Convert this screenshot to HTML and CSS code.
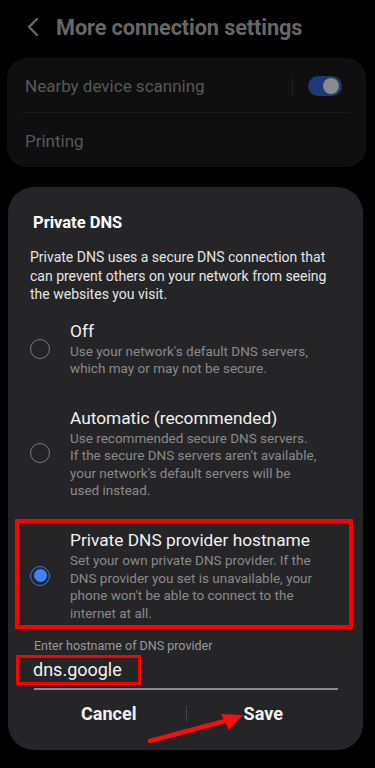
FILE: index.html
```html
<!DOCTYPE html>
<html>
<head>
<meta charset="utf-8">
<link rel="stylesheet" href="styles.css">
</head>
<body>
<div class="screen">
  <header class="topbar">
    <svg class="back" width="14" height="20" viewBox="0 0 14 20"><path d="M11 2 L3 10 L11 18" fill="none" stroke="#6a6a6a" stroke-width="2.4" stroke-linecap="round" stroke-linejoin="round"/></svg>
    <h1 class="title">More connection settings</h1>
  </header>

  <section class="card">
    <div class="row row-toggle">
      <span class="row-label">Nearby device scanning</span>
      <span class="vsep"></span>
      <span class="toggle"><span class="knob"></span></span>
    </div>
    <div class="hsep"></div>
    <div class="row">
      <span class="row-label">Printing</span>
    </div>
  </section>

  <section class="dialog">
    <h2 class="dlg-title">Private DNS</h2>
    <p class="dlg-desc">Private DNS uses a secure DNS connection that<br>can prevent others on your network from seeing<br>the websites you visit.</p>

    <div class="option opt-off">
      <span class="radio"></span>
      <div class="opt-text">
        <div class="opt-title">Off</div>
        <div class="opt-desc">Use your network's default DNS servers,<br>which may or may not be secure.</div>
      </div>
    </div>

    <div class="option opt-auto">
      <span class="radio"></span>
      <div class="opt-text">
        <div class="opt-title">Automatic (recommended)</div>
        <div class="opt-desc">Use recommended secure DNS servers.<br>If the secure DNS servers aren't available,<br>your network's default servers will be<br>used instead.</div>
      </div>
    </div>

    <div class="option opt-host">
      <span class="radio radio-on"><span class="dot"></span></span>
      <div class="opt-text">
        <div class="opt-title">Private DNS provider hostname</div>
        <div class="opt-desc">Set your own private DNS provider. If the<br>DNS provider you set is unavailable, your<br>phone won't be able to connect to the<br>internet at all.</div>
      </div>
    </div>

    <div class="field">
      <div class="field-label">Enter hostname of DNS provider</div>
      <div class="field-box"><span class="field-value">dns.google</span></div>
      <div class="field-line"></div>
    </div>

    <div class="actions">
      <span class="btn">Cancel</span>
      <span class="asep"></span>
      <span class="btn">Save</span>
    </div>

    <svg class="arrow" width="110" height="40" viewBox="0 0 110 40"><line x1="3" y1="34" x2="82" y2="13" stroke="#f41010" stroke-width="4.5" stroke-linecap="round"/><polygon points="96,8 74,7 82,23" fill="#f41010"/></svg>
  </section>
</div>
</body>
</html>
```

FILE: styles.css
```css
* { box-sizing: border-box; }
html, body { margin: 0; padding: 0; background: #000; }
body { font-family: Roboto, "Noto Sans", sans-serif; color: #eee; }
.screen { width: 375px; height: 768px; overflow: hidden; background: #000; }

.topbar { height: 58px; display: flex; align-items: center; padding-left: 26px; padding-bottom: 4px; }
.back { flex: none; }
.title { margin: 0 0 0 16px; font-size: 21.7px; font-weight: 700; color: #676767; letter-spacing: -0.1px; }

.card { margin: 0 9px 0 7px; background: #0f0f0f; border-radius: 20px; padding: 0 16px 0 18px; }
.row { height: 54px; display: flex; align-items: center; padding-top: 1px; }
.row-label { font-size: 17px; color: #585858; flex: 1; }
.vsep { width: 1px; height: 20px; background: #1e1e1e; margin-right: 15px; }
.toggle { width: 34px; height: 20px; border-radius: 10px; background: #1c3a78; position: relative; margin-right: 8px; }
.knob { position: absolute; right: 3px; top: 2px; width: 16px; height: 16px; border-radius: 50%; background: #8a8a8a; }
.hsep { height: 1px; background: #1c1c1c; margin-left: -2px; }

.dialog { position: relative; margin: 20px 12px 0 8px; height: 563px; background: #252527; border-radius: 26px; padding: 22px 0 0 0; }
.dlg-title { margin: 0 0 0 25px; font-size: 16.5px; font-weight: 700; color: #fff; line-height: 28px; }
.dlg-desc { margin: 11px 0 0 22px; font-size: 14px; line-height: 18.5px; color: #e6e6e6; white-space: nowrap; }

.option { display: flex; align-items: center; margin-left: 7px; margin-right: 10px; padding-left: 15px; }
.opt-off { margin-top: 16px; }
.opt-auto { margin-top: 29px; }
.opt-host { margin-top: 19px; border: 4px solid #ff0000; padding: 6px 0 3px 11px; }
.radio { flex: none; width: 20px; height: 20px; border-radius: 50%; border: 1.5px solid #7a7a7a; margin-right: 20px; display: flex; align-items: center; justify-content: center; }
.radio-on { border-color: #3d78f0; }
.dot { width: 13px; height: 13px; border-radius: 50%; background: #3d82ff; }
.opt-text { flex: 1; }
.opt-title { font-size: 17.3px; line-height: 22px; color: #f0f0f0; }
.opt-desc { font-size: 13.5px; line-height: 17.6px; color: #8a8a8a; margin-top: 1px; white-space: nowrap; }

.field { margin: 9px 25px 0 8px; }
.field-label { font-size: 12.5px; color: #9a9a9a; padding-left: 18px; line-height: 16px; }
.field-box { display: inline-block; margin-top: 1px; border: 3.5px solid #ff0000; width: 125px; height: 30px; padding-left: 14px; padding-top: 0; }
.field-value { font-size: 18px; line-height: 23px; color: #f2f2f2; }
.field-line { height: 1.5px; background: #8a8a8a; margin: 3px 0 0 18px; }

.actions { display: flex; align-items: center; margin-top: 12px; padding: 0 23px 0 24px; }
.btn { flex: 1; text-align: center; font-size: 18px; font-weight: 700; color: #f2f2f2; line-height: 24px; }
.asep { width: 1px; height: 16px; background: #444; }
.arrow { position: absolute; left: 139px; top: 520px; }
```
